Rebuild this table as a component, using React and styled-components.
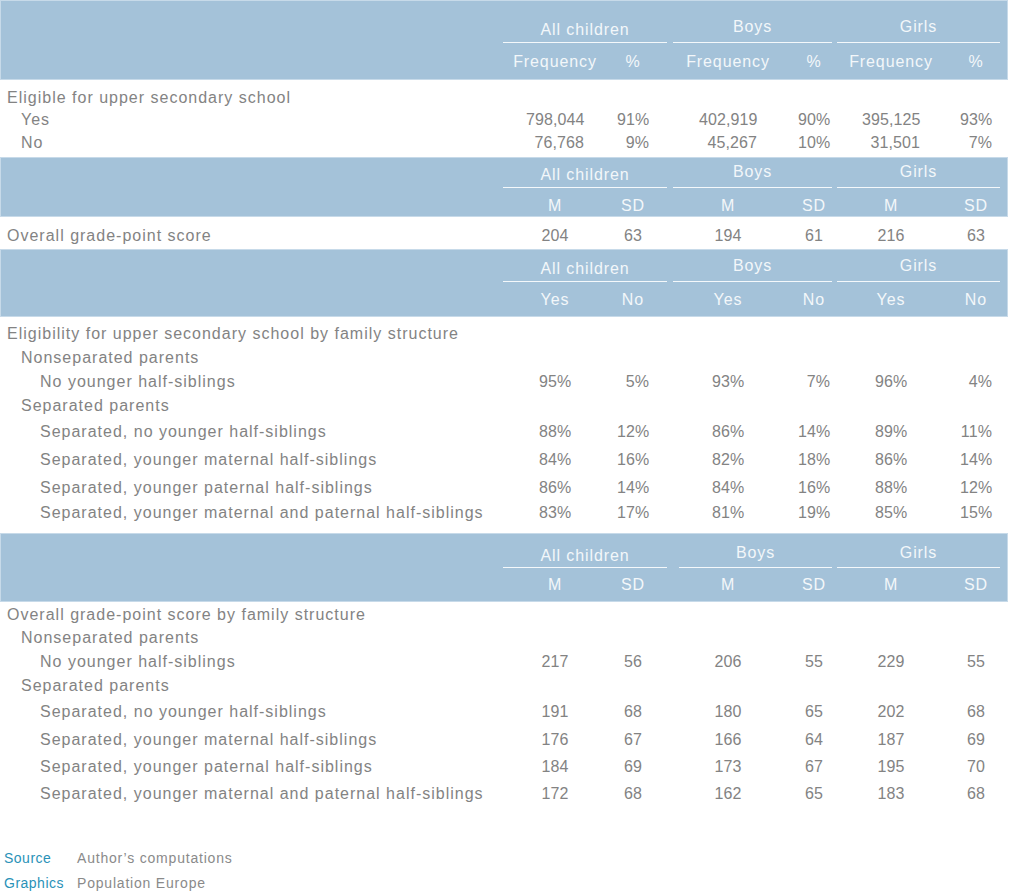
import React from 'react';
import styled, { createGlobalStyle } from 'styled-components';

const COLS = '502px 104px 52px 138px 34px 120px 50px 6px';

const GlobalStyle = createGlobalStyle`
  html, body {
    margin: 0;
    padding: 0;
    background: #fff;
  }
  body {
    font-family: "Liberation Sans", Arial, sans-serif;
    font-size: 16px;
    line-height: 19px;
  }
`;

const Page = styled.div`
  width: 1008px;
`;

const Band = styled.div`
  display: grid;
  grid-template-columns: ${COLS};
  grid-template-rows: ${p => p.top}px ${p => p.bottom}px;
  background: #a4c2d9;
  border: 1px solid #c7dae9;
  color: #f3f7fa;
  letter-spacing: 0.9px;
`;

const GroupHead = styled.div`
  grid-row: 1;
  grid-column: ${p => p.col};
  margin: 0 ${p => p.mr}px 0 ${p => p.ml}px;
  border-bottom: 1px solid #f4f8fb;
  display: flex;
  align-items: flex-end;
  justify-content: center;
  padding-bottom: ${p => p.pb}px;
`;

const SubHead = styled.div`
  grid-row: 2;
  grid-column: ${p => p.col};
  display: flex;
  align-items: center;
  justify-content: center;
  padding-top: ${p => p.shift || 0}px;
`;

const Body = styled.div`
  padding: ${p => p.pt || 0}px 1px ${p => p.pb || 0}px;
  color: #838383;
`;

const Row = styled.div`
  display: grid;
  grid-template-columns: ${COLS};
  height: ${p => p.h}px;
  align-items: center;
`;

const Label = styled.div`
  padding-left: ${p => [6, 20, 39][p.level || 0]}px;
  letter-spacing: 1px;
  white-space: nowrap;
`;

const Value = styled.div`
  justify-self: center;
  width: ${p => (p.w ? `${p.w}px` : 'auto')};
  text-align: right;
  white-space: nowrap;
  letter-spacing: 0.1px;
`;

const Footer = styled.div`
  display: grid;
  grid-template-columns: 73px auto;
  grid-auto-rows: 25px;
  align-items: center;
  margin-top: 40px;
  padding-left: 4px;
  font-size: 14px;
  letter-spacing: 0.8px;
`;

const FootKey = styled.div`
  color: #2a92b8;
  letter-spacing: 0.5px;
`;

const FootValue = styled.div`
  color: #8a8a8a;
`;

const GROUPS = [
  { name: 'All children', col: '2 / 4', ml: 0, mr: -8, low: true },
  { name: 'Boys', col: '4 / 6', ml: 14, mr: -1 },
  { name: 'Girls', col: '6 / 8', ml: 6, mr: 1 },
];

const SECTIONS = [
  {
    band: { top: 42, bottom: 36, pb: 3, shift: 0, boysMl: 14 },
    subs: ['Frequency', '%', 'Frequency', '%', 'Frequency', '%'],
    widths: [58, 32, 58, 32, 58, 32],
    body: { pt: 6, pb: 4 },
    rows: [
      { label: 'Eligible for upper secondary school', level: 0, h: 22 },
      { label: 'Yes', level: 1, h: 23, values: ['798,044', '91%', '402,919', '90%', '395,125', '93%'] },
      { label: 'No', level: 1, h: 22, values: ['76,768', '9%', '45,267', '10%', '31,501', '7%'] },
    ],
  },
  {
    band: { top: 30, bottom: 28, pb: 3, shift: 7, boysMl: 14 },
    subs: ['M', 'SD', 'M', 'SD', 'M', 'SD'],
    widths: [],
    body: { pt: 5, pb: 1 },
    rows: [
      { label: 'Overall grade-point score', level: 0, h: 26, values: ['204', '63', '194', '61', '216', '63'] },
    ],
  },
  {
    band: { top: 32, bottom: 34, pb: 3, shift: 0, boysMl: 14 },
    subs: ['Yes', 'No', 'Yes', 'No', 'Yes', 'No'],
    widths: [32, 32, 32, 32, 32, 32],
    body: { pt: 5, pb: 10 },
    rows: [
      { label: 'Eligibility for upper secondary school by family structure', level: 0, h: 23 },
      { label: 'Nonseparated parents', level: 1, h: 24 },
      { label: 'No younger half-siblings', level: 2, h: 24, values: ['95%', '5%', '93%', '7%', '96%', '4%'] },
      { label: 'Separated parents', level: 1, h: 25 },
      { label: 'Separated, no younger half-siblings', level: 2, h: 27, values: ['88%', '12%', '86%', '14%', '89%', '11%'] },
      { label: 'Separated, younger maternal half-siblings', level: 2, h: 28, values: ['84%', '16%', '82%', '18%', '86%', '14%'] },
      { label: 'Separated, younger paternal half-siblings', level: 2, h: 28, values: ['86%', '14%', '84%', '16%', '88%', '12%'] },
      { label: 'Separated, younger maternal and paternal half-siblings', level: 2, h: 22, values: ['83%', '17%', '81%', '19%', '85%', '15%'] },
    ],
  },
  {
    band: { top: 34, bottom: 33, pb: 2, shift: 0, boysMl: 20 },
    subs: ['M', 'SD', 'M', 'SD', 'M', 'SD'],
    widths: [],
    body: { pt: 0, pb: 0 },
    rows: [
      { label: 'Overall grade-point score by family structure', level: 0, h: 24 },
      { label: 'Nonseparated parents', level: 1, h: 23 },
      { label: 'No younger half-siblings', level: 2, h: 24, values: ['217', '56', '206', '55', '229', '55'] },
      { label: 'Separated parents', level: 1, h: 24 },
      { label: 'Separated, no younger half-siblings', level: 2, h: 28, values: ['191', '68', '180', '65', '202', '68'] },
      { label: 'Separated, younger maternal half-siblings', level: 2, h: 28, values: ['176', '67', '166', '64', '187', '69'] },
      { label: 'Separated, younger paternal half-siblings', level: 2, h: 27, values: ['184', '69', '173', '67', '195', '70'] },
      { label: 'Separated, younger maternal and paternal half-siblings', level: 2, h: 26, values: ['172', '68', '162', '65', '183', '68'] },
    ],
  },
];

function Section({ band, subs, widths, body, rows }) {
  return (
    <>
      <Band top={band.top} bottom={band.bottom}>
        {GROUPS.map(g => (
          <GroupHead
            key={g.name}
            col={g.col}
            ml={g.name === 'Boys' ? band.boysMl : g.ml}
            mr={g.mr}
            pb={g.low ? band.pb : band.pb + 3}
          >
            {g.name}
          </GroupHead>
        ))}
        {subs.map((s, i) => (
          <SubHead key={i} col={i + 2} shift={band.shift}>
            {s}
          </SubHead>
        ))}
      </Band>
      <Body pt={body.pt} pb={body.pb}>
        {rows.map((r, i) => (
          <Row key={i} h={r.h}>
            <Label level={r.level}>{r.label}</Label>
            {r.values &&
              r.values.map((v, j) => (
                <Value key={j} w={widths[j]}>
                  {v}
                </Value>
              ))}
          </Row>
        ))}
      </Body>
    </>
  );
}

export default function App() {
  return (
    <Page>
      <GlobalStyle />
      {SECTIONS.map((s, i) => (
        <Section key={i} {...s} />
      ))}
      <Footer>
        <FootKey>Source</FootKey>
        <FootValue>Author’s computations</FootValue>
        <FootKey>Graphics</FootKey>
        <FootValue>Population Europe</FootValue>
      </Footer>
    </Page>
  );
}
